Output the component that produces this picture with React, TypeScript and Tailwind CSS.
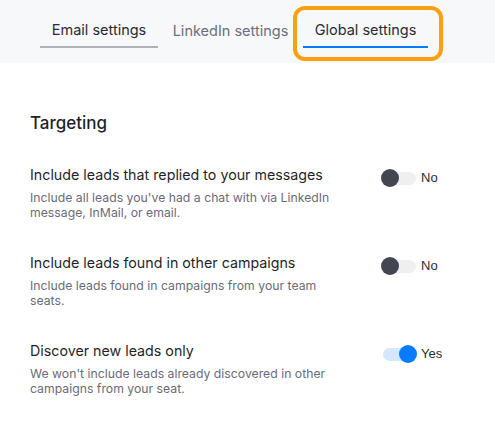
import React from "react";

type Item = { title: string; desc: string; on: boolean };

const items: Item[] = [
  {
    title: "Include leads that replied to your messages",
    desc: "Include all leads you've had a chat with via LinkedIn message, InMail, or email.",
    on: false,
  },
  {
    title: "Include leads found in other campaigns",
    desc: "Include leads found in campaigns from your team seats.",
    on: false,
  },
  {
    title: "Discover new leads only",
    desc: "We won't include leads already discovered in other campaigns from your seat.",
    on: true,
  },
];

function Toggle({ on }: { on: boolean }) {
  return (
    <div className="flex items-center gap-[4px]">
      <div className="relative h-[18px] w-[36px]">
        <div
          className={
            on
              ? "absolute left-[2px] right-[4px] top-[3px] h-[13px] rounded-full bg-[#d6e7fd]"
              : "absolute left-[2px] right-[1px] top-[3px] h-[13px] rounded-full bg-[#efefef]"
          }
        />
        <div
          className={
            on
              ? "absolute right-[0px] top-0 h-[18px] w-[18px] rounded-full bg-[#0a7bff]"
              : "absolute left-0 top-0 h-[18px] w-[18px] rounded-full bg-[#434651]"
          }
        />
      </div>
      <span className="font-['Liberation_Sans',sans-serif] text-[13px] text-[#2b2b33]">
        {on ? "Yes" : "No"}
      </span>
    </div>
  );
}

export default function App() {
  return (
    <div className="h-[440px] w-[495px] overflow-hidden bg-white font-['Inter',sans-serif]">
      {/* Tabs */}
      <div className="flex h-[63px] bg-[#f7f8fa] pl-[40px] pt-[8px]">
        <div className="flex h-[40px] w-[118px] items-center justify-center border-b-2 border-[#b1b1b9] pt-[5px] text-[14.5px] text-[#2a2a35]">
          Email settings
        </div>
        <div className="flex h-[40px] w-[145px] items-center justify-center pt-[5px] text-[14.5px] text-[#6b6f7b]">
          LinkedIn settings
        </div>
        <div className="relative flex h-[40px] w-[125px] items-center justify-center border-b-2 border-[#0a7bff] pt-[5px] text-[14.5px] text-[#2a2a35]">
          Global settings
          <span className="absolute -left-[10px] -right-[15px] -top-[2px] -bottom-[15px] rounded-[12px] border-[4px] border-[#f99f12]" />
        </div>
      </div>

      {/* Content */}
      <div className="px-[30px] pt-[48px]">
        <h2 className="text-[17px] font-medium leading-6 text-[#1f1f2b]">Targeting</h2>
        <div className="mt-[29px] flex flex-col gap-[32px]">
          {items.map((item, i) => (
            <div key={i} className="flex items-start">
              <div className="w-[351px]">
                <div className="text-[14.25px] leading-[22px] text-[#1f1f2b]">{item.title}</div>
                <div className="mt-[4px] w-[305px] text-[12.25px] leading-[15px] text-[#6b6b78]">
                  {item.desc}
                </div>
              </div>
              <div className="pt-[4px]">
                <Toggle on={item.on} />
              </div>
            </div>
          ))}
        </div>
      </div>
    </div>
  );
}
